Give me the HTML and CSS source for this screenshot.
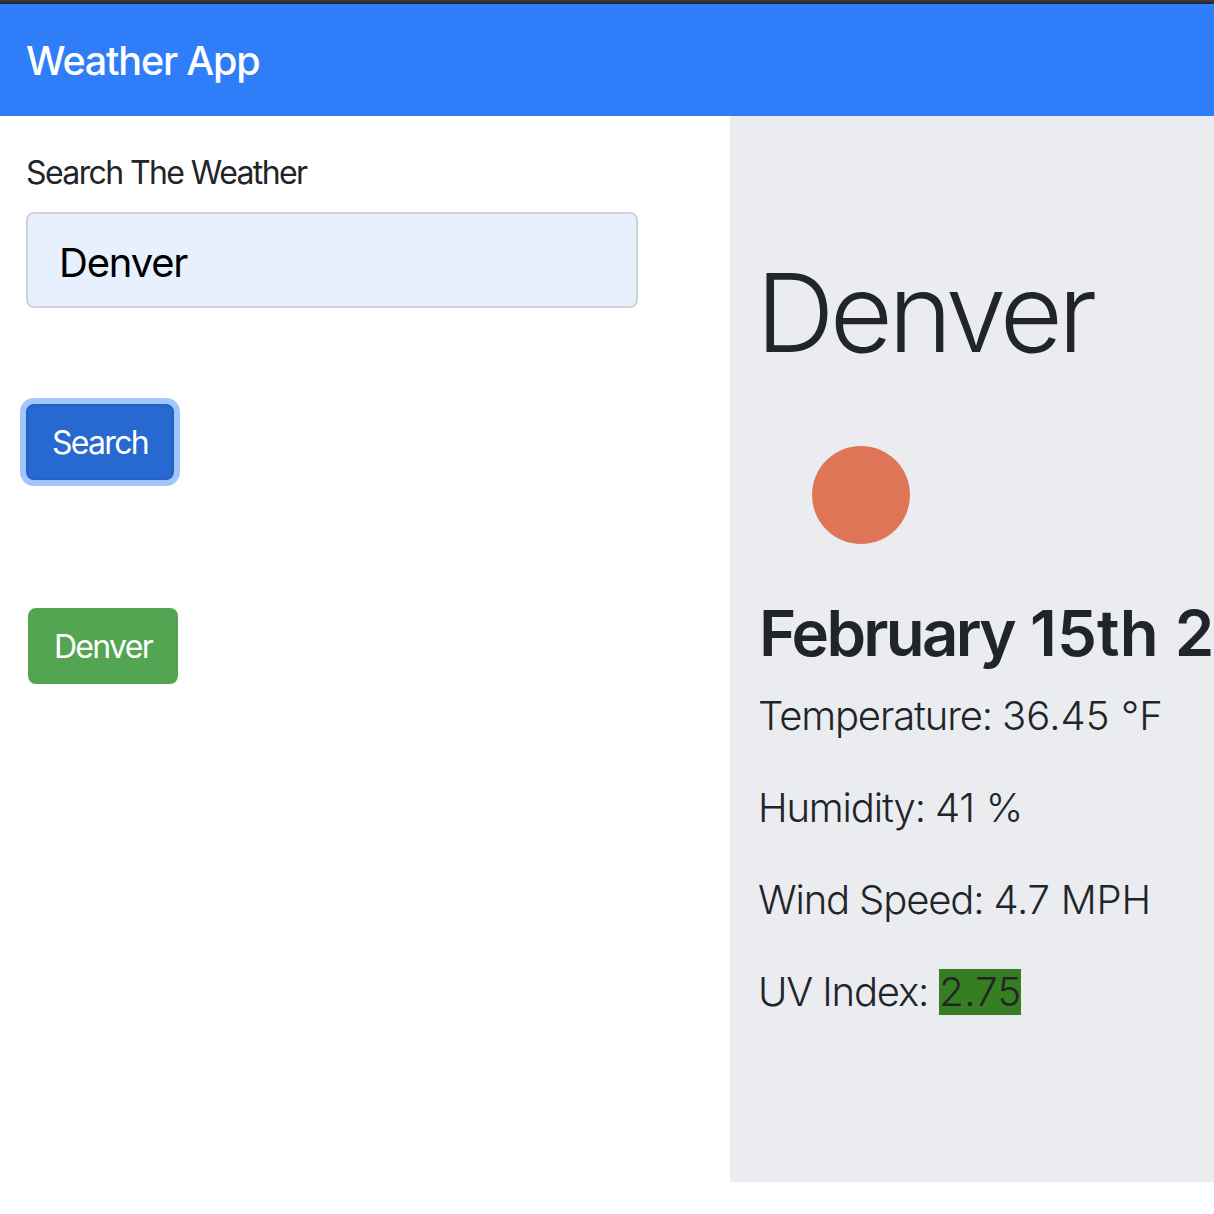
FILE: index.html
```html
<!DOCTYPE html>
<html lang="en">
<head>
<meta charset="utf-8">
<title>Weather App</title>
<link rel="stylesheet" href="styles.css">
</head>
<body>
<header class="navbar"><span class="brand">Weather App</span></header>
<main class="layout">
  <section class="search">
    <label class="search-label" for="city">Search The Weather</label>
    <input class="search-input" id="city" type="text" value="Denver">
    <button class="btn btn-primary" type="button">Search</button>
    <button class="btn btn-success" type="button">Denver</button>
  </section>
  <section class="forecast">
    <h1 class="city">Denver</h1>
    <svg class="icon" viewBox="0 0 200 200" aria-hidden="true"><circle cx="101" cy="99" r="49"/></svg>
    <h2 class="date"><span class="month">February</span> 15th 2</h2>
    <p class="stat">Temperature: <span class="value">36.45 °F</span></p>
    <p class="stat">Humidity: <span class="value value-tight">41 %</span></p>
    <p class="stat">Wind Speed: <span class="value value-tight">4.7 MPH</span></p>
    <p class="stat">UV Index: <span class="value uv">2.75</span></p>
  </section>
</main>
</body>
</html>
```

FILE: styles.css
```css
* { box-sizing: border-box; }
body {
  margin: 0;
  height: 1214px;
  overflow: hidden;
  background: #fff;
  color: #212529;
  font-family: Inter, "Liberation Sans", sans-serif;
}
.navbar {
  height: 116px;
  padding: 34px 26px 0;
  background: linear-gradient(#38383b 2px, #29292c 2px, #29292c 4px, #2f7df9 4px);
  color: #fff;
}
.brand { display: block; font-size: 39.5px; line-height: 54px; font-weight: 500; letter-spacing: -1.2px; white-space: nowrap; }
.layout { display: flex; height: 1066px; }
.search {
  flex: 0 0 730px;
  display: flex;
  flex-direction: column;
  align-items: flex-start;
  padding: 33px 0 0 26px;
}
.search-label { height: 63px; font-size: 32px; line-height: 48px; letter-spacing: -1.6px; white-space: nowrap; }
.search-input {
  width: 612px;
  height: 96px;
  padding: 4px 31px 0;
  border: 2px solid #ced4da;
  border-radius: 8px;
  background: #e8f0fe;
  color: #000;
  font: 40px/60px Inter, "Liberation Sans", sans-serif;
  letter-spacing: -1.2px;
}
.btn {
  height: 76px;
  padding: 2px 0 0;
  border: 2px solid;
  border-radius: 8px;
  color: #fff;
  font: 32px/48px Inter, "Liberation Sans", sans-serif;
  letter-spacing: -1.7px;
}
.btn-primary { width: 148px; margin-top: 96px; border-color: #2462c2; background: #2769d0; box-shadow: 0 0 0 6px #a1c6fc; }
.btn-success { width: 150px; margin: 128px 0 0 2px; border-color: #53a551; background: #53a551; }
.forecast { flex: 0 0 484px; padding: 128px 0 0 29px; overflow: hidden; background: #ebecf0; white-space: nowrap; }
.city { margin: 0 0 0 -3px; font-size: 109px; line-height: 136px; font-weight: 300; letter-spacing: -4.7px; }
.icon { display: block; width: 200px; height: 200px; margin: 16px 0 0 1px; fill: #de7556; }
.date { margin: -2px 0 15px; font-size: 63.5px; line-height: 77px; font-weight: 600; letter-spacing: 0.1px; }
.month { letter-spacing: -2.7px; }
.stat { margin: 0 0 32px -1px; font-size: 40px; line-height: 60px; font-weight: 300; letter-spacing: -1.15px; }
.value { letter-spacing: 0.1px; }
.value-tight { letter-spacing: -0.2px; }
.uv { display: inline-block; height: 46px; margin-left: 1px; line-height: 45px; letter-spacing: 0.3px; background: #377d22; }
```
